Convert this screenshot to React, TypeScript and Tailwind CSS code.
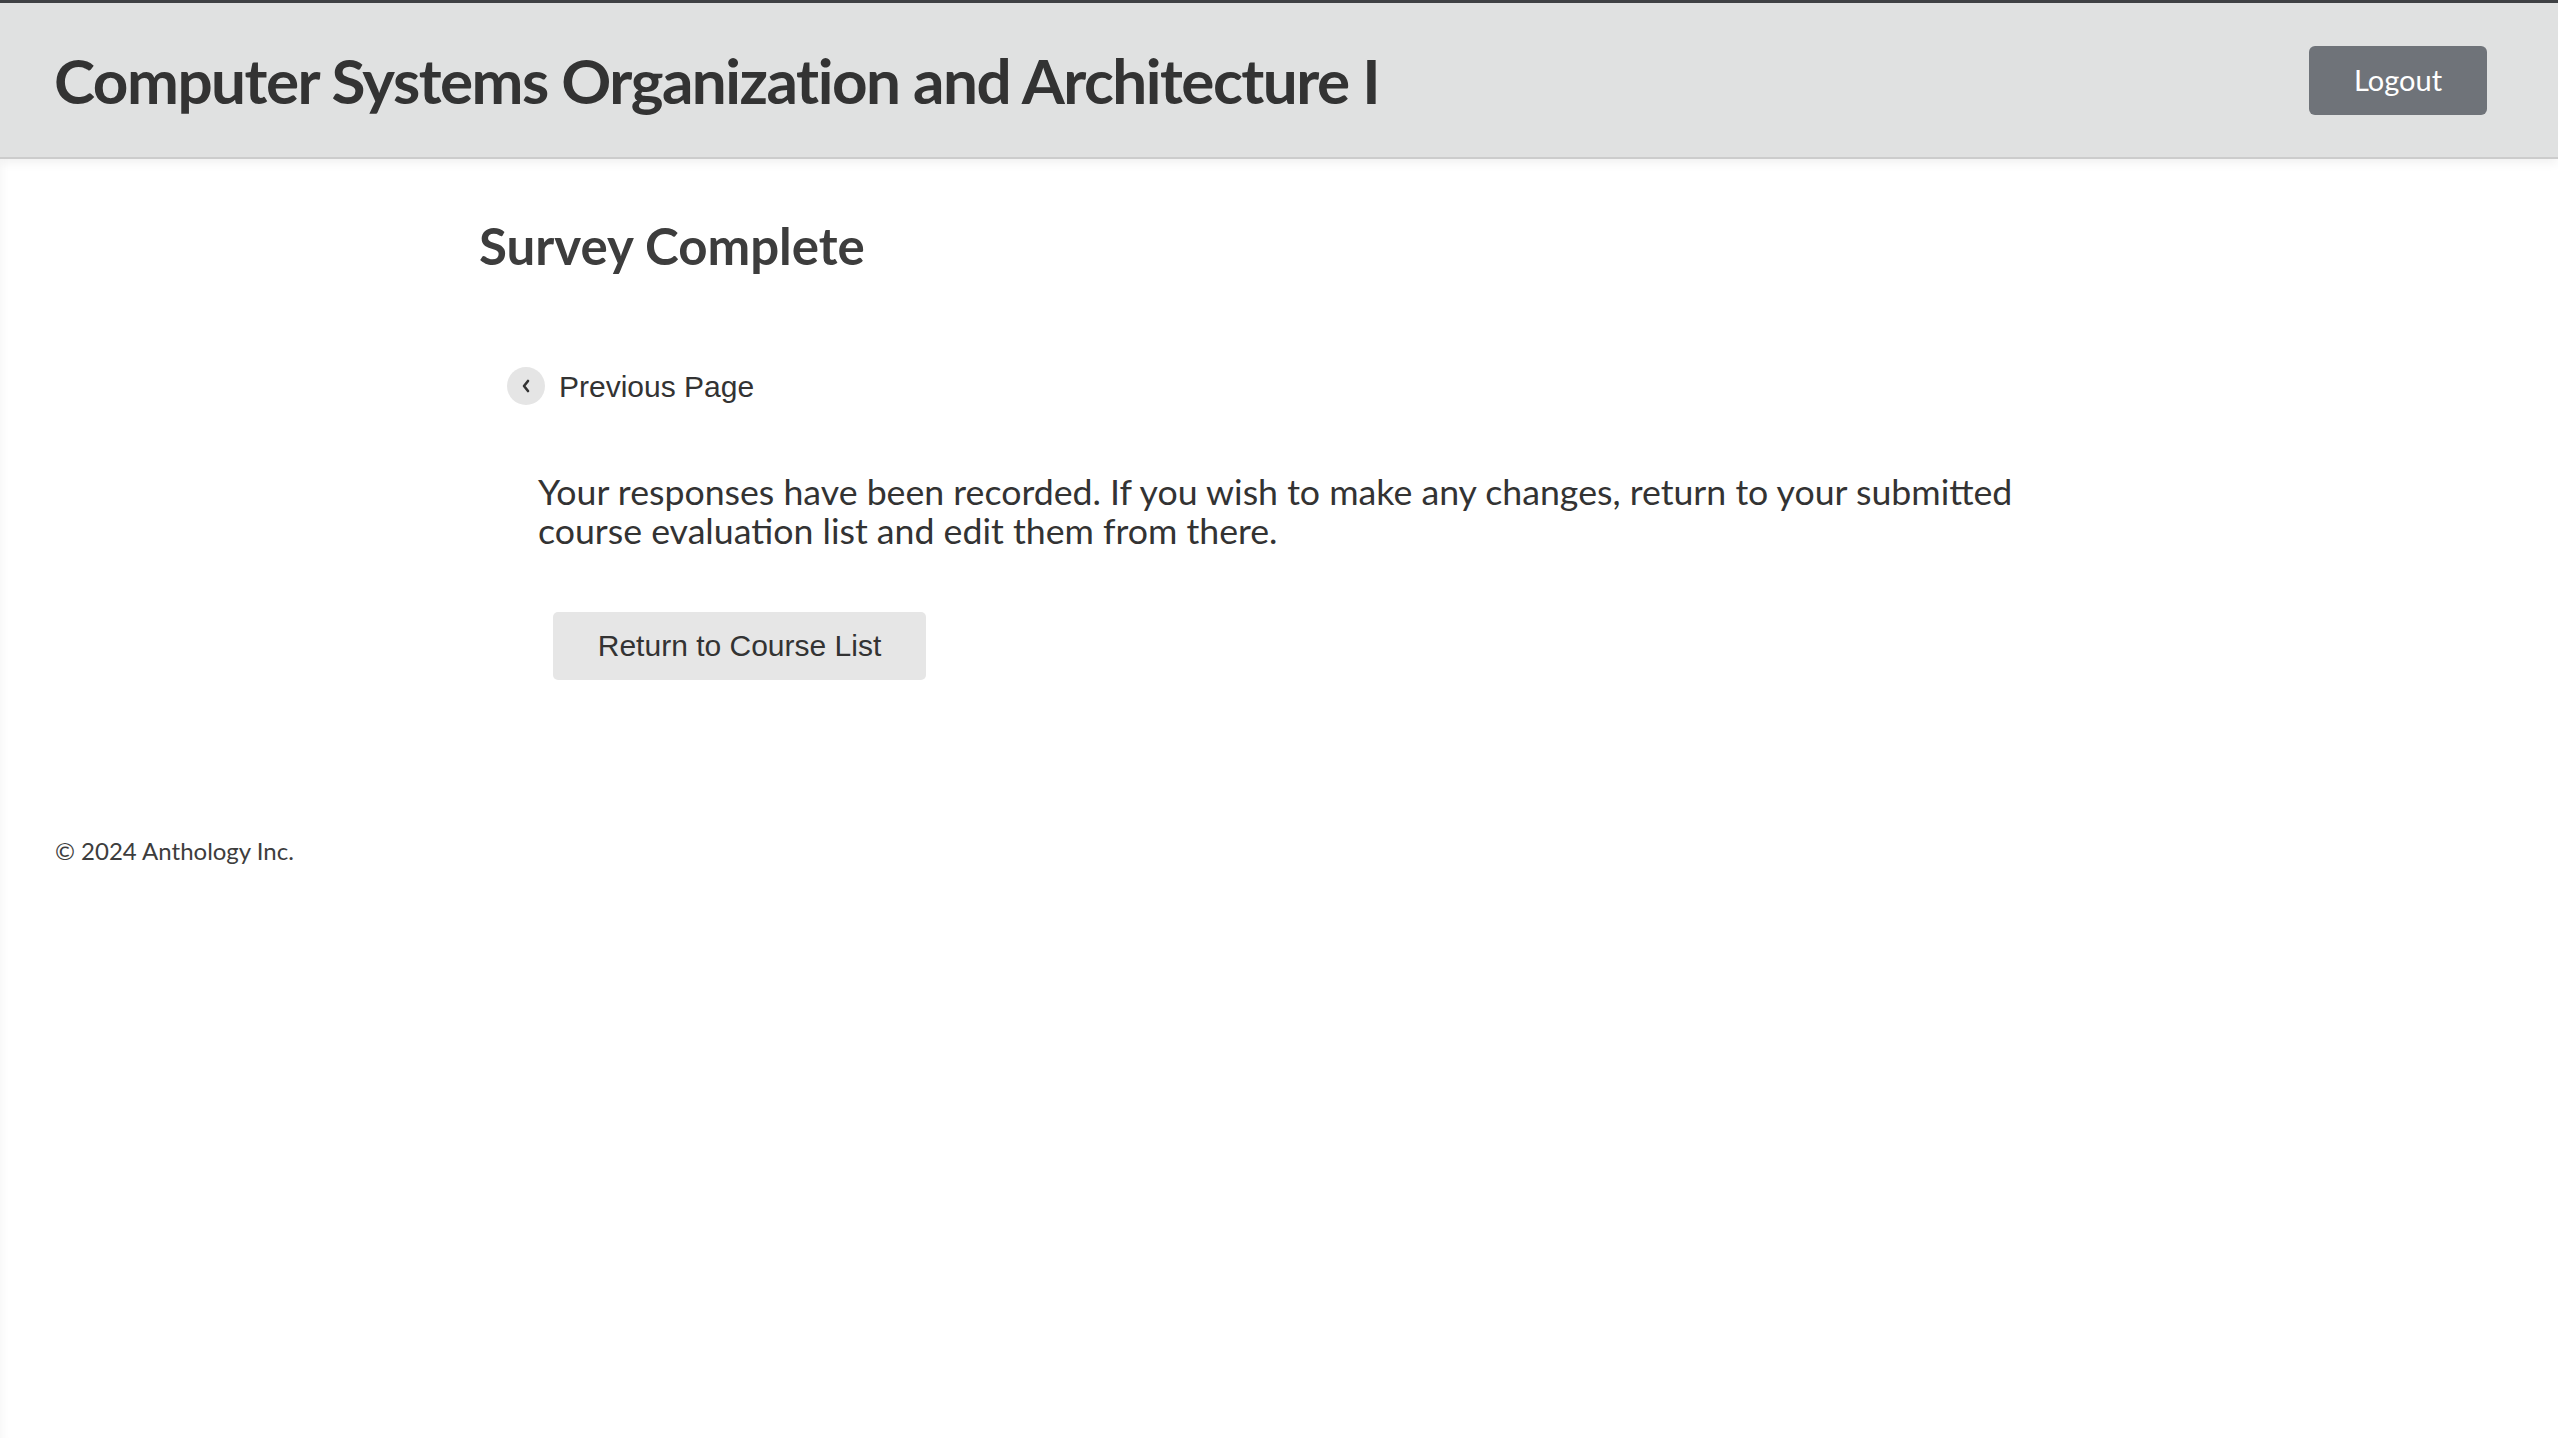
import React from 'react'

const sans = "font-['Lato','Open_Sans',sans-serif]"
const arial = "font-['Liberation_Sans',Arial,sans-serif]"

const Header = () => (
  <header className="h-[159px] bg-[#e0e1e1] border-t-[3px] border-[#3f4144] border-b-2 border-b-[#cccccc] shadow-[0_4px_10px_rgba(0,0,0,0.06)] flex items-center justify-between pl-[54px] pr-[71px]">
    <h1 className={`${sans} text-[62px] font-bold text-[#333333] tracking-[-1.5px] leading-none`}>
      Computer Systems Organization and Architecture I
    </h1>
    <button className={`${sans} w-[178px] h-[69px] rounded-[6px] bg-[#6f7379] text-white text-[29px]`}>
      Logout
    </button>
  </header>
)

const App = () => {
  return (
    <div className="min-h-screen bg-white shadow-[inset_10px_0_10px_-8px_rgba(0,0,0,0.04)]">
      <Header />

      <main className="pl-[479px] pt-[55px]">
        <h2 className={`${sans} text-[51px] font-bold text-[#3d3d3d] leading-tight`}>Survey Complete</h2>

        <div className="mt-[86px] ml-[28px] flex items-center gap-[14px]">
          <span className="w-[38px] h-[38px] rounded-full bg-[#e5e5e5] flex items-center justify-center">
            <svg width="10" height="14" viewBox="0 0 10 14" fill="none">
              <path d="M7 2 L3 7 L7 12" stroke="#333" strokeWidth="2.6" strokeLinecap="round" strokeLinejoin="round" />
            </svg>
          </span>
          <a className={`${arial} text-[30px] text-[#333333]`}>Previous Page</a>
        </div>

        <p className={`${sans} mt-[63px] ml-[59px] max-w-[1500px] text-[35.7px] leading-[39px] text-[#333333]`}>
          Your responses have been recorded. If you wish to make any changes, return to your submitted
          <br />
          course evaluation list and edit them from there.
        </p>

        <button className={`${arial} mt-[62px] ml-[74px] w-[373px] h-[68px] rounded-[5px] bg-[#e6e6e6] text-[30px] text-[#333333]`}>
          Return to Course List
        </button>
      </main>

      <footer className={`${sans} pl-[55px] mt-[153px] text-[24px] text-[#3d3d3d]`}>
        © 2024 Anthology Inc.
      </footer>
    </div>
  )
}

export default App
